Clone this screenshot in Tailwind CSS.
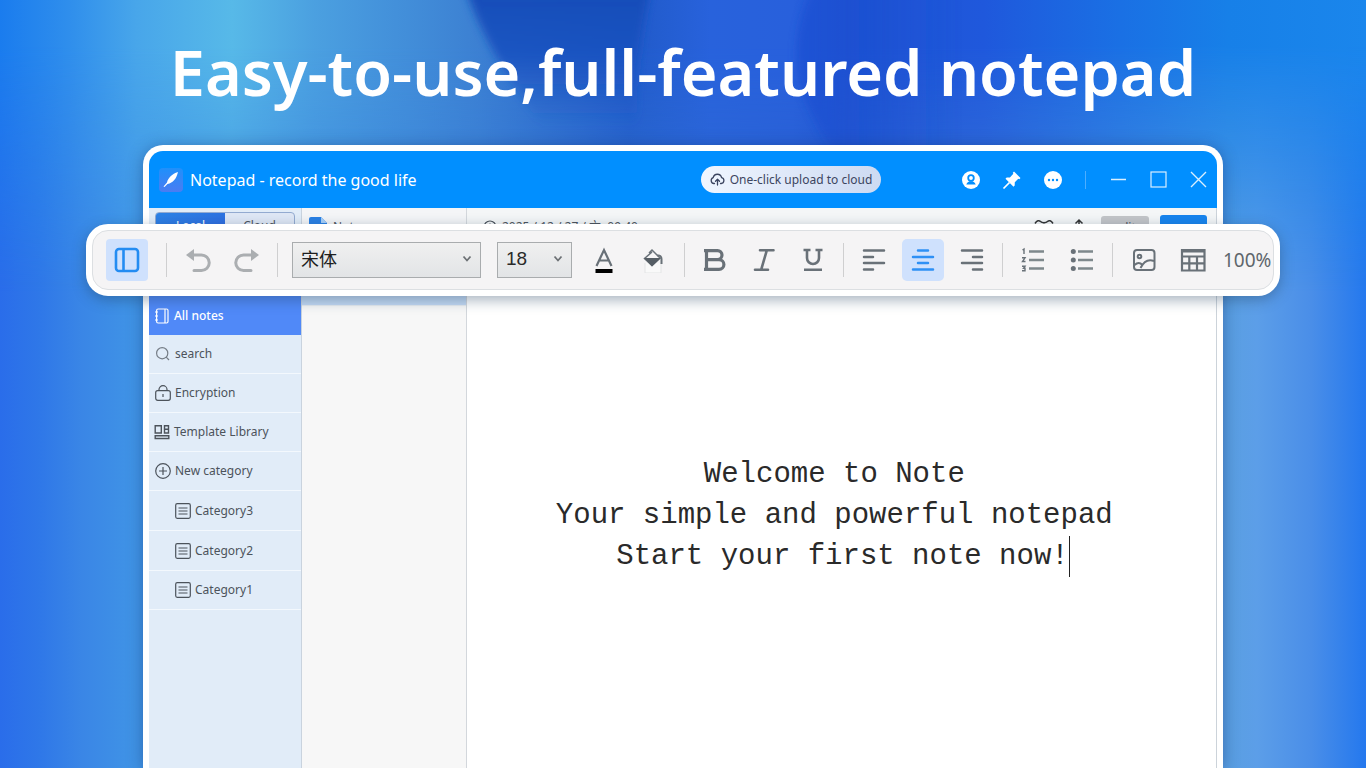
<!DOCTYPE html>
<html lang="en">
<head>
<meta charset="utf-8">
<meta name="viewport" content="width=device-width, initial-scale=1">
<title>Notepad</title>
<script src="https://cdn.jsdelivr.net/npm/@tailwindcss/browser@4"></script>
</head>
<body class="font-['Noto_Sans','Noto_Sans_CJK_SC',sans-serif] text-[#4c535b]">
<div class="relative isolate flex h-screen flex-col overflow-hidden bg-[#2b72e8]">

  <!-- Backdrop -->
  <div aria-hidden="true" class="absolute inset-0 -z-10 bg-[linear-gradient(90deg,#2a6dea_0%,#2f78e8_3%,#3a86e6_6%,#4094e6_10%,#3c86dc_30%,#2a60d0_60%,#5a9fe2_90%,#5c9ee8_92%,#4a8ee8_96%,#2478ee_100%)]"></div>
  <div aria-hidden="true" class="absolute inset-0 -z-10 bg-[linear-gradient(90deg,#1a7cee_0%,#2f8eec_5%,#48a6ea_10%,#57b9e8_17%,#4ba0e0_23%,#4390da_29%,#3c80d2_35%,#2f6ecc_40%,#205ac8_46%,#2862dc_52%,#2860dc_58%,#1f54d2_62%,#1f58dc_72%,#1a70e4_82%,#1780e8_90%,#1a86ec_100%)] [mask-image:linear-gradient(180deg,#000_0%,#000_6%,transparent_38%)]"></div>
  <svg aria-hidden="true" class="absolute inset-x-0 top-0 -z-10 h-[200px] w-full" viewBox="0 0 1366 200" preserveAspectRatio="none">
    <defs>
      <filter id="soft" x="-20%" y="-20%" width="140%" height="140%"><feGaussianBlur stdDeviation="4"/></filter>
      <linearGradient id="fold" x1="0" x2="0" y1="0" y2="1"><stop offset="0" stop-color="#184cb8"/><stop offset=".4" stop-color="#1b52c0" stop-opacity=".9"/><stop offset=".85" stop-color="#1d55c4" stop-opacity="0"/></linearGradient>
      <linearGradient id="edge" x1="0" x2="1" y1="0" y2="0"><stop offset="0" stop-color="#194bd0"/><stop offset="1" stop-color="#194bd0" stop-opacity="0"/></linearGradient>
    </defs>
    <path d="M466-10C480 30 500 70 560 150L640 150C632 80 640 40 650-10Z" fill="url(#fold)" filter="url(#soft)"/>
    <path d="M812-10C796 20 792 60 802 90C812 120 830 150 850 170L960 170L960-10Z" fill="url(#edge)" opacity=".6" filter="url(#soft)"/>
  </svg>

  <h1 class="h-[145px] shrink-0 pt-[31px] text-center text-[63px]/[82px] font-semibold whitespace-nowrap text-white">Easy-to-use,full-featured notepad</h1>

  <main class="relative flex min-h-0 flex-1 flex-col px-[86px]">

    <!-- Application window -->
    <section class="mx-[57px] flex min-h-0 flex-1 flex-col overflow-hidden rounded-t-[20px] border-6 border-b-0 border-white bg-white shadow-[0_2px_16px_rgba(20,50,110,0.45)]">
      <header class="flex h-[57px] shrink-0 items-center bg-[#018fff] pr-[8px] pl-[10px] text-white">
        <svg class="size-[24px]" viewBox="0 0 24 24"><defs><linearGradient id="logo" x1="0" y1="0" x2="0" y2="1"><stop offset="0" stop-color="#1f90fb"/><stop offset="1" stop-color="#4a7cf2"/></linearGradient></defs><rect width="24" height="24" rx="4" fill="url(#logo)"/><path d="M19 4C13 6 9 10 8 14.500L4.500 18.500L5.500 19L8.500 16C14 15 17.500 10.500 19 4Z" fill="#fff"/></svg>
        <h2 class="ml-[7px] text-[16px] whitespace-nowrap">Notepad - record the good life</h2>
        <div class="flex-1"></div>
        <button class="flex h-[27px] w-[180px] shrink-0 items-center justify-center gap-[5px] rounded-full bg-linear-to-r from-[#f0f6ff] to-[#cddaf2] text-[12px] whitespace-nowrap text-[#3c4560]">
          <svg class="size-[15px]" viewBox="0 0 15 15" fill="none" stroke="currentColor" stroke-width="1.300" stroke-linecap="round" stroke-linejoin="round"><path d="M4.500 11.500H3.800A3 3 0 0 1 3.200 5.700A4.300 4.300 0 0 1 11.600 5.600A3 3 0 0 1 11.200 11.500H10.500M7.500 13V7.500M5.500 9.300L7.500 7.300L9.500 9.300"/></svg>
          One-click upload to cloud
        </button>
        <div class="ml-[80px] flex items-center gap-[21px]">
          <button aria-label="Account"><svg class="size-[20px]" viewBox="0 0 20 20"><circle cx="10" cy="10" r="9" fill="#fff"/><circle cx="10" cy="8" r="2.800" fill="none" stroke="#018fff" stroke-width="1.800"/><path d="M5.300 14.500C6 12.500 7.500 11.800 8.500 11.300H11.500C12.500 11.800 14 12.500 14.700 14.500Z" fill="#018fff"/></svg></button>
          <button aria-label="Pin"><svg class="size-[20px]" viewBox="0 0 20 20" fill="#fff"><path d="M12 1.500L18.500 8L17.300 9.200L16.300 8.800L12.800 12.300L12.700 15.500L11.500 16.700L3.500 8.700L4.700 7.500L7.900 7.400L11.300 3.800L10.800 2.700Z"/><path d="M7.500 12.500L1.500 18.500" stroke="#fff" stroke-width="1.700"/></svg></button>
          <button aria-label="More"><svg class="size-[20px]" viewBox="0 0 20 20"><circle cx="10" cy="10" r="9" fill="#fff"/><g fill="#018fff"><circle cx="6" cy="10" r="1.200"/><circle cx="10" cy="10" r="1.200"/><circle cx="14" cy="10" r="1.200"/></g></svg></button>
        </div>
        <div class="mx-[22px] h-[18px] w-px bg-[#4eaeff]"></div>
        <div class="flex items-center gap-[19px] text-[#d9efff]">
          <button aria-label="Minimize"><svg class="size-[21px]" viewBox="0 0 21 21"><path d="M3 10.500H18" stroke="currentColor" stroke-width="1.600"/></svg></button>
          <button aria-label="Maximize"><svg class="size-[21px]" viewBox="0 0 21 21"><rect x="3" y="3" width="15" height="15" fill="none" stroke="currentColor" stroke-width="1.200"/></svg></button>
          <button aria-label="Close"><svg class="size-[21px]" viewBox="0 0 21 21"><path d="M3 3L18 18M18 3L3 18" stroke="currentColor" stroke-width="1.400"/></svg></button>
        </div>
      </header>

      <div class="flex min-h-0 flex-1">
        <nav class="flex w-[153px] shrink-0 flex-col border-r border-[#c9d3de] bg-[#e1ecf8] text-[12px]">
          <div class="h-[88px] shrink-0 px-[6px] pt-[4px]">
            <div class="flex h-[28px] overflow-hidden rounded-[4px] border border-[#93aad0] bg-[#dfe7f5]">
              <button class="w-1/2 bg-linear-to-br from-[#2c83e6] to-[#2e62dc] text-white">Local</button>
              <button class="w-1/2">Cloud</button>
            </div>
          </div>
          <button class="flex h-[39px] shrink-0 items-center gap-[4px] bg-[#5089f8] pl-[5px] font-medium text-white">
            <svg class="size-[16px]" viewBox="0 0 16 16" fill="none" stroke="currentColor" stroke-width="1.200"><rect x="2.600" y="1" width="11.400" height="14" rx="1.500"/><path d="M11 1V15M1 4H4M1 8H4M1 12H4"/></svg>All notes</button>
          <button class="flex h-[39px] shrink-0 items-center gap-[4px] border-b border-[#f3f8fd] pl-[6px]">
            <svg class="size-[16px]" viewBox="0 0 16 16" fill="none" stroke="#757d86" stroke-width="1.200"><circle cx="7.200" cy="7.200" r="5.600"/><path d="M11.200 11.200L14 14"/></svg>search</button>
          <button class="flex h-[39px] shrink-0 items-center gap-[4px] border-b border-[#f3f8fd] pl-[6px]">
            <svg class="size-[16px]" viewBox="0 0 16 16" fill="none" stroke="currentColor" stroke-width="1.200"><rect x=".7" y="5.600" width="14.600" height="9.700" rx="2"/><path d="M4 5.600V4.500A4 3.800 0 0 1 12 4.500V5.600M8 9V12"/></svg>Encryption</button>
          <button class="flex h-[39px] shrink-0 items-center gap-[4px] border-b border-[#f3f8fd] pl-[5px] whitespace-nowrap">
            <svg class="size-[16px]" viewBox="0 0 16 16" fill="none" stroke="currentColor" stroke-width="1.400"><path d="M1.200 1.700H7.300V9H1.200ZM10.500 1.700H14.500V9H10.500ZM1.200 11.800H14.800V14.500H1.200ZM10.500 5.300H14.500"/></svg>Template Library</button>
          <button class="flex h-[39px] shrink-0 items-center gap-[4px] border-b border-[#f3f8fd] pl-[6px]">
            <svg class="size-[16px]" viewBox="0 0 16 16" fill="none" stroke="currentColor" stroke-width="1.200"><circle cx="8" cy="8" r="7.300"/><path d="M8 4V12M4 8H12"/></svg>New category</button>
          <button class="flex h-[40px] shrink-0 items-center gap-[4px] border-b border-[#f3f8fd] pl-[26px]">
            <svg class="size-[16px]" viewBox="0 0 16 16" fill="none" stroke="currentColor" stroke-width="1.200"><rect x=".7" y=".7" width="14.600" height="14.600" rx="1.500"/><path d="M3.500 5H12.500M3.500 8H12.500M3.500 11H12.500"/></svg>Category3</button>
          <button class="flex h-[40px] shrink-0 items-center gap-[4px] border-b border-[#f3f8fd] pl-[26px]">
            <svg class="size-[16px]" viewBox="0 0 16 16" fill="none" stroke="currentColor" stroke-width="1.200"><rect x=".7" y=".7" width="14.600" height="14.600" rx="1.500"/><path d="M3.500 5H12.500M3.500 8H12.500M3.500 11H12.500"/></svg>Category2</button>
          <button class="flex h-[39px] shrink-0 items-center gap-[4px] border-b border-[#f3f8fd] pl-[26px]">
            <svg class="size-[16px]" viewBox="0 0 16 16" fill="none" stroke="currentColor" stroke-width="1.200"><rect x=".7" y=".7" width="14.600" height="14.600" rx="1.500"/><path d="M3.500 5H12.500M3.500 8H12.500M3.500 11H12.500"/></svg>Category1</button>
        </nav>

        <aside class="w-[165px] shrink-0 border-r border-[#d3d7dc] bg-[#f7f7f7]">
          <div class="h-[98px] border-b border-[#e8ecf0] bg-[#c4daf4]">
            <div class="flex h-[44px] items-start gap-[6px] bg-[#f4f5f7] pt-[9px] pl-[7px] text-[12px]/[20px]">
              <svg class="h-[20px] w-[18px]" viewBox="0 0 18 20"><path d="M2 0H12L18 6V20H2A2 2 0 0 1 0 18V2A2 2 0 0 1 2 0Z" fill="#2a80e4"/><path d="M12 0L18 6H12Z" fill="#a8d0fa"/></svg>
              <span>Note</span>
            </div>
          </div>
        </aside>

        <article class="flex min-w-0 flex-1 flex-col border-r border-[#ccd3da] bg-white">
          <div class="flex h-[44px] shrink-0 items-start bg-[#f4f6f7] pt-[7px] pr-[9px] pl-[16px] text-[12px]/[20px]">
            <svg class="mt-[5px] size-[14px]" viewBox="0 0 14 14" fill="none" stroke="currentColor" stroke-width="1.200"><circle cx="7" cy="7" r="6"/><path d="M7 3.500V7H10"/></svg>
            <time class="ml-[5px] pt-[2px] whitespace-pre">2025 / 12 / 27 / 六  09:40</time>
            <div class="flex-1"></div>
            <button aria-label="Reminder"><svg class="mt-[4px] size-[20px]" viewBox="0 0 20 20" fill="none" stroke="#333" stroke-width="1.500"><path d="M1 4.500C3 1.500 5 1 6.500 2.500C8 4 12 4 13.500 2.500C15 1 17 1.500 19 4.500"/><circle cx="10" cy="12" r="6.500"/></svg></button>
            <button aria-label="Share" class="ml-[15px]"><svg class="mt-[3px] size-[20px]" viewBox="0 0 20 20" fill="none" stroke="#333" stroke-width="1.500"><path d="M10 14V2M6.500 5.500L10 2L13.500 5.500M3 11V18H17V11"/></svg></button>
            <button class="mt-px ml-[12px] h-[24px] w-[48px] rounded-[3px] bg-[#c3c5c8]">edit</button>
            <button class="ml-[11px] h-[24px] w-[47px] rounded-[3px] bg-[#1784ee] text-white">save</button>
          </div>
          <div role="textbox" aria-label="Note text" aria-multiline="true" contenteditable="true" spellcheck="false" class="mt-[202px] pl-[3px] text-center font-['Liberation_Mono',monospace] text-[29px]/[41px] whitespace-pre text-[#2a2a2a] outline-none"><div>Welcome to Note&nbsp;</div><div>Your simple and powerful notepad&nbsp;</div><div class="flex justify-center"><span class="border-r border-[#222]">Start your first note now!</span></div></div>
        </article>
      </div>
    </section>

    <!-- Floating formatting toolbar, over the window -->
    <div role="toolbar" aria-label="Formatting" class="absolute inset-x-[86px] top-[79px] rounded-[22px] border-6 border-white bg-white shadow-[0_4px_14px_rgba(30,60,90,0.4)]">
      <div class="flex h-[60px] items-center overflow-hidden rounded-[16px] border border-[#dcdfe2] bg-[#f5f4f5] pl-[13px] text-[#697178]">
        <button aria-label="Toggle sidebar" class="grid size-[42px] shrink-0 place-items-center rounded-[4px] bg-[#cfe1fd] text-[#238cf2]"><svg class="size-[26px]" viewBox="0 0 26 26" fill="none" stroke="currentColor" stroke-width="2.600"><rect x="2" y="2" width="22" height="22" rx="3"/><path d="M9.500 2V24"/></svg></button>
        <div class="mr-[10px] ml-[18px] h-[34px] w-px shrink-0 bg-[#cfcfd0]"></div>
        <div class="flex gap-[7px] text-[#abaeb1]">
          <button aria-label="Undo" class="grid size-[42px] place-items-center"><svg class="size-[26px]" viewBox="0 0 26 26"><path d="M1 8L9 2V14Z" fill="currentColor"/><path d="M7 8H16.500A7.700 7.700 0 0 1 16.500 23.500H9" fill="none" stroke="currentColor" stroke-width="3" stroke-linecap="round"/></svg></button>
          <button aria-label="Redo" class="grid size-[42px] place-items-center"><svg class="size-[26px]" viewBox="0 0 26 26"><path d="M25 8L17 2V14Z" fill="currentColor"/><path d="M19 8H9.500A7.700 7.700 0 0 0 9.500 23.500H17" fill="none" stroke="currentColor" stroke-width="3" stroke-linecap="round"/></svg></button>
        </div>
        <div class="mr-[14px] ml-[9px] h-[34px] w-px shrink-0 bg-[#cfcfd0]"></div>
        <div class="relative shrink-0">
          <select aria-label="Font" class="h-[36px] w-[189px] appearance-none border border-[#a9acae] bg-linear-to-b from-[#f0f0f0] to-[#e2e4e6] pb-[3px] pl-[8px] font-['Noto_Sans_CJK_SC',sans-serif] text-[18px] text-[#1e1e1e]"><option>宋体</option></select>
          <svg class="pointer-events-none absolute top-[12px] right-[9px] size-[10px]" viewBox="0 0 10 10" fill="none" stroke="#6c7074" stroke-width="1.800"><path d="M1.500 2.500L5 6.500L8.500 2.500"/></svg>
        </div>
        <div class="relative ml-[16px] shrink-0">
          <select aria-label="Font size" class="h-[36px] w-[75px] appearance-none border border-[#a9acae] bg-linear-to-b from-[#f0f0f0] to-[#e2e4e6] pb-[2px] pl-[8px] font-['Liberation_Sans',sans-serif] text-[19px] text-[#2a2a2a]"><option>18</option></select>
          <svg class="pointer-events-none absolute top-[12px] right-[9px] size-[10px]" viewBox="0 0 10 10" fill="none" stroke="#6c7074" stroke-width="1.800"><path d="M1.500 2.500L5 6.500L8.500 2.500"/></svg>
        </div>
        <div class="ml-[11px] flex gap-[7px]">
          <button aria-label="Text colour" class="grid size-[42px] place-items-center"><svg class="size-[26px]" viewBox="0 0 26 26"><path d="M5.500 19L13 3L20.500 19M8 13.500H18" fill="none" stroke="currentColor" stroke-width="2.200"/><path d="M4.500 22H21.500V26H4.500Z" fill="#000"/></svg></button>
          <button aria-label="Highlight colour" class="grid size-[42px] place-items-center"><svg class="size-[26px]" viewBox="0 0 26 26"><path d="M5 16V26H21V16" fill="#f9f9f9" stroke="#e3e4e5"/><path d="M9 6L12 3L20 11L12 18.500L4.500 11.500L12 5" fill="none" stroke="currentColor" stroke-width="1.500"/><path d="M4 11H21L12 19.500Z" fill="#565e65"/><path d="M17.500 8.500C20 8 21.500 9.500 21.500 12V17" fill="none" stroke="currentColor" stroke-width="2"/></svg></button>
        </div>
        <div class="mr-[9px] ml-[10px] h-[34px] w-px shrink-0 bg-[#cfcfd0]"></div>
        <div class="flex gap-[7px]">
          <button aria-label="Bold" class="grid size-[42px] place-items-center"><svg class="size-[26px]" viewBox="0 0 26 26" fill="none" stroke="currentColor" stroke-width="3.200"><path d="M2 3.600H15.500A4.400 4.400 0 0 1 15.500 12.600H6M15.500 12.600H17A4.700 4.700 0 0 1 17 22.400H2M4.500 3.600V22.400"/></svg></button>
          <button aria-label="Italic" class="grid size-[42px] place-items-center"><svg class="size-[26px]" viewBox="0 0 26 26" fill="none" stroke="currentColor" stroke-width="2.600" stroke-linecap="round"><path d="M9 3.300H22.500M4 22.700H17M15.800 3.300L10.200 22.700"/></svg></button>
          <button aria-label="Underline" class="grid size-[42px] place-items-center"><svg class="size-[26px]" viewBox="0 0 26 26" fill="none" stroke="currentColor" stroke-width="2.600"><path d="M3.500 3H10.500M15.500 3H22.500M7 3V11A6 6 0 0 0 19 11V3M4 22.700H22"/></svg></button>
        </div>
        <div class="mx-[9px] h-[34px] w-px shrink-0 bg-[#cfcfd0]"></div>
        <div class="flex gap-[7px]">
          <button aria-label="Align left" class="grid size-[42px] place-items-center"><svg class="size-[26px]" viewBox="0 0 26 26" fill="none" stroke="currentColor" stroke-width="2.500" stroke-linecap="round"><path d="M3 3.500H23M3 10H12M3 16H23M3 22.500H12"/></svg></button>
          <button aria-label="Align centre" aria-pressed="true" class="grid size-[42px] place-items-center rounded-[5px] bg-[#cfe1fd] text-[#2e90f5]"><svg class="size-[26px]" viewBox="0 0 26 26" fill="none" stroke="currentColor" stroke-width="2.500" stroke-linecap="round"><path d="M8 3.500H18M3 10H23M8 16H18M3 22.500H23"/></svg></button>
          <button aria-label="Align right" class="grid size-[42px] place-items-center"><svg class="size-[26px]" viewBox="0 0 26 26" fill="none" stroke="currentColor" stroke-width="2.500" stroke-linecap="round"><path d="M3 3.500H23M14 10H23M3 16H23M14 22.500H23"/></svg></button>
        </div>
        <div class="mx-[9px] h-[34px] w-px shrink-0 bg-[#cfcfd0]"></div>
        <div class="flex gap-[7px]">
          <button aria-label="Numbered list" class="grid size-[42px] place-items-center"><svg class="size-[26px]" viewBox="0 0 26 26" fill="none" stroke="currentColor" stroke-width="2.500"><path d="M9 4.500H24M9 13H24M9 21.500H24" stroke="#7e888c"/><path d="M2.500 3L4 2V7M2 10.800H5L2.500 14.500H5.500M2 19.300H5L3.500 21.300H5V23.700H2" stroke-width="1.400"/></svg></button>
          <button aria-label="Bulleted list" class="grid size-[42px] place-items-center"><svg class="size-[26px]" viewBox="0 0 26 26" fill="none" stroke="currentColor" stroke-width="2.500"><path d="M9 4.500H24M9 13H24M9 21.500H24" stroke="#7e888c"/><g fill="currentColor" stroke="none"><circle cx="4.300" cy="4.500" r="2.500"/><circle cx="4.300" cy="13" r="2.500"/><circle cx="4.300" cy="21.500" r="2.500"/></g></svg></button>
        </div>
        <div class="mr-[10px] ml-[9px] h-[34px] w-px shrink-0 bg-[#cfcfd0]"></div>
        <div class="flex gap-[7px]">
          <button aria-label="Insert image" class="grid size-[42px] place-items-center"><svg class="size-[26px]" viewBox="0 0 26 26" fill="none" stroke="currentColor" stroke-width="2"><rect x="3" y="3" width="20.500" height="20" rx="3"/><circle cx="8.500" cy="9.500" r="1.800"/><path d="M3.500 18C7 15 9 15.500 11.500 18M9.500 21C13 14 18 12 23 14"/></svg></button>
          <button aria-label="Insert table" class="grid size-[42px] place-items-center"><svg class="size-[26px]" viewBox="0 0 26 26" fill="none" stroke="currentColor" stroke-width="2.200"><path d="M2 3H24.500V23.500H2ZM2 4.500H24.500M2 9.500H24.500M2 16.300H24.500M9.300 9V23.500M17 9V23.500"/></svg></button>
        </div>
        <button class="ml-[9px] text-[19px] text-[#5e666c]" aria-label="Zoom level">100%</button>
      </div>
    </div>
  </main>
</div>
</body>
</html>
